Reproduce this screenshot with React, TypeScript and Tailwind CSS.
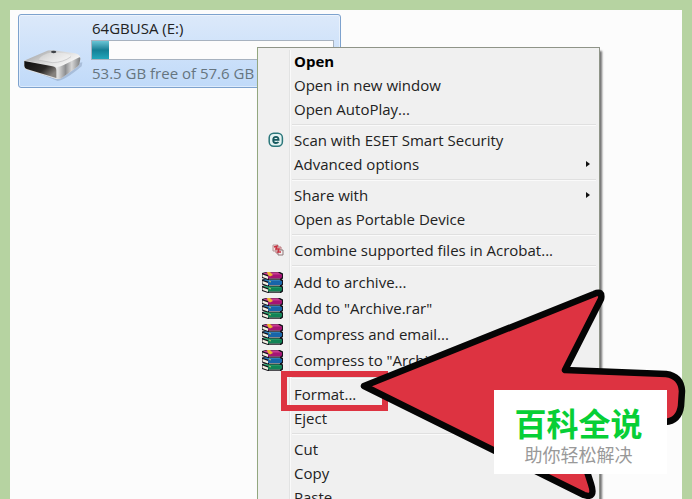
import type { ReactNode } from 'react';

function DriveIcon() {
  return (
    <svg viewBox="18 115 186 105" className="h-[35px] w-[62px]" aria-hidden="true">
      <defs>
        <linearGradient id="driveTop" x1="0" y1="0" x2="1" y2="1">
          <stop offset="0" stopColor="#8f9193" />
          <stop offset="0.35" stopColor="#d4d4d4" />
          <stop offset="0.6" stopColor="#f2f2f2" />
          <stop offset="1" stopColor="#d0d1d2" />
        </linearGradient>
        <linearGradient id="driveSide" x1="0" y1="0" x2="1" y2="0">
          <stop offset="0" stopColor="#f7f7f7" />
          <stop offset="0.2" stopColor="#c2c2c2" />
          <stop offset="0.4" stopColor="#8d8e90" />
          <stop offset="0.65" stopColor="#d6d6d6" />
          <stop offset="1" stopColor="#7c7e80" />
        </linearGradient>
        <linearGradient id="driveFront" x1="0" y1="0" x2="1" y2="0.6">
          <stop offset="0" stopColor="#0e0e0e" />
          <stop offset="0.65" stopColor="#2b2826" />
          <stop offset="1" stopColor="#85817d" />
        </linearGradient>
      </defs>
      <path d="M40 178 L128 214 Q150 212 200 170 L202 158 L150 170 Z" fill="#8297b4" opacity="0.45" />
      <path d="M27 153 L90 126 Q100 121 115 122 L180 131 Q196 134 196 146 L193 164 Q190 170 182 175 L140 205 Q132 210 122 207 L34 179 Q28 176 27 170 Z" fill="url(#driveTop)" />
      <path d="M122 172 Q136 172 146 166 L190 144 Q197 141 196 148 L193 164 Q190 170 182 175 L140 205 Q132 210 122 207 Z" fill="url(#driveSide)" />
      <path d="M70 151 Q78 134 112 128 L150 131 Q172 136 164 143 Q146 156 118 159 Z" fill="#fff" opacity="0.3" />
      <path d="M70 151 L112 159 Q146 158 168 141" fill="none" stroke="#bcbdbe" strokeWidth="2" />
      <path d="M27 152 L112 168 Q128 170 129 181 L129 206 Q125 209 118 206 L34 180 Q28 177 27 170 Z" fill="#dedede" />
      <path d="M28 154 L112 170 Q124 172 124 182 L124 205 L35 178 Q29 176 28 169 Z" fill="url(#driveFront)" />
      <ellipse cx="116" cy="127" rx="8" ry="3.5" fill="#3f4246" />
    </svg>
  );
}

function EsetIcon() {
  return (
    <svg viewBox="0 0 16 16" className="h-4 w-4" aria-hidden="true">
      <rect x="1.2" y="1.2" width="13.2" height="13" rx="4.5" fill="#e4f3f2" stroke="#2b777b" strokeWidth="1.5" />
      <path d="M5.2 7.9 H10.6 Q10.5 4.8 8 4.8 Q5.2 4.8 5.2 7.9 Q5.2 11 8 11 Q9.6 11 10.5 10" fill="none" stroke="#17595f" strokeWidth="1.8" />
    </svg>
  );
}

function CombineIcon() {
  return (
    <svg viewBox="0 0 12 12" className="h-3 w-3" aria-hidden="true">
      <path d="M1 1 H6 V7 H1 Z" fill="#f3dede" stroke="#b59496" />
      <path d="M4 3 H9 V9 H4 Z" fill="#f3cccc" stroke="#b8777d" />
      <path d="M6 6 H11 V11 H6 Z" fill="#f4eeee" stroke="#8c7779" />
      <path d="M2 3 L5 2 L4 5 L7 5 L6 8 L9 8" fill="none" stroke="#c7303f" strokeWidth="1.4" />
    </svg>
  );
}

function Book({ y, color, light }: { y: number; color: string; light: string }) {
  return (
    <g transform={`translate(0 ${y})`}>
      <path d="M1 1 L5 0 H19 L22 1.500 V6.500 L20 8 H7 L1 6 Z" fill="#15131a" />
      <path d="M1.500 2.500 L7 4.500 V7 L1.500 5 Z" fill="#f3efe2" />
      <path d="M2 1.500 L6 0.300 H17 L21 3 H7 Z" fill={light} />
      <path d="M7 2.500 H21 V5 L20 6.500 H7 Z" fill={color} />
      <path d="M8 7 H19" stroke="#d5d5d5" strokeWidth="0.6" />
    </g>
  );
}

function RarIcon() {
  return (
    <svg viewBox="0 0 23 23" className="h-[23px] w-[23px]" aria-hidden="true">
      <Book y={14} color="#118355" light="#35ac79" />
      <Book y={7.5} color="#1865a8" light="#2f7fba" />
      <Book y={1} color="#a51474" light="#c83b91" />
      <path d="M6 1 L9 1 L12 4 L9 5.500 L7 4 Z" fill="#ecb52f" />
      <path d="M8 10 L10 11 M8 17 L10 18" stroke="#c3cc6b" strokeWidth="1" />
    </svg>
  );
}

type ItemProps = {
  label: string;
  icon?: ReactNode;
  bold?: boolean;
  submenu?: boolean;
  tall?: boolean;
};

function MenuItem({ label, icon, bold, submenu, tall }: ItemProps) {
  return (
    <button
      type="button"
      role="menuitem"
      className={`flex w-full items-center text-left whitespace-nowrap ${tall ? 'h-[26px]' : 'h-6'} ${bold ? 'font-bold text-black' : ''}`}
    >
      <span className={`flex w-9 shrink-0 items-center ${tall ? 'pl-[3px]' : 'justify-end pr-2.5'}`}>{icon}</span>
      <span className="flex-1">{label}</span>
      {submenu && (
        <svg viewBox="0 0 4 6" className="mr-[9px] h-1.5 w-1" aria-hidden="true">
          <path d="M0 0 L4 3 L0 6 Z" fill="#111" />
        </svg>
      )}
    </button>
  );
}

function Separator({ wide }: { wide?: boolean }) {
  return (
    <div role="separator" className={`mr-[3px] ml-[34px] flex items-center ${wide ? 'h-[9px]' : 'h-[7px]'}`}>
      <div className="h-0.5 w-full border-t border-[#e0e0e0] bg-[#fafafa]" />
    </div>
  );
}

function ContextMenu() {
  return (
    <div
      role="menu"
      className="absolute top-[47px] left-[257px] w-[343px] border border-[#8f9488] border-l-[#93a77f] bg-[#f0f0f0] py-px shadow-[2px_4px_2px_rgba(0,0,0,0.55)]"
    >
      <div className="absolute inset-y-0.5 left-[31px] w-0.5 border-l border-[#e2e3e3] bg-[#fafafa]" />
      <div className="relative">
        <MenuItem label="Open" bold />
        <MenuItem label="Open in new window" />
        <MenuItem label="Open AutoPlay..." />
        <Separator />
        <MenuItem label="Scan with ESET Smart Security" icon={<EsetIcon />} />
        <MenuItem label="Advanced options" submenu />
        <Separator />
        <MenuItem label="Share with" submenu />
        <MenuItem label="Open as Portable Device" />
        <Separator />
        <MenuItem label="Combine supported files in Acrobat..." icon={<CombineIcon />} />
        <Separator />
        <MenuItem label="Add to archive..." icon={<RarIcon />} tall />
        <MenuItem label={'Add to "Archive.rar"'} icon={<RarIcon />} tall />
        <MenuItem label="Compress and email..." icon={<RarIcon />} tall />
        <MenuItem label={'Compress to "Archive.rar" and email'} icon={<RarIcon />} tall />
        <Separator wide />
        <MenuItem label="Format..." />
        <MenuItem label="Eject" />
        <Separator />
        <MenuItem label="Cut" />
        <MenuItem label="Copy" />
        <MenuItem label="Paste" />
      </div>
    </div>
  );
}

function DriveTile() {
  return (
    <section className="mt-1 ml-2 flex h-[74px] w-[323px] items-center rounded-[3px] border border-[#7da2ce] bg-linear-to-b from-[#dce9fa] to-[#c0daf9] shadow-[inset_0_0_0_1px_rgba(255,255,255,0.45)]">
      <div className="mt-7 ml-0.5 shrink-0">
        <DriveIcon />
      </div>
      <div className="ml-2 flex-1 pr-1.5">
        <h1 className="pl-px leading-6">64GBUSA (E:)</h1>
        <div className="h-5 border border-[#a7b2bf] bg-[#fcfcfc]">
          <div className="h-full w-[17px] bg-linear-to-b from-[#67c6d6] via-[#137f95] to-[#23a7bb]" />
        </div>
        <p className="pl-px leading-[26px] text-[#66757f]">53.5 GB free of 57.6 GB</p>
      </div>
    </section>
  );
}

export default function App() {
  return (
    <main className="relative h-screen overflow-hidden bg-[#b6d3a1] px-2.5 pt-2.5 font-['Open_Sans','Noto_Sans',sans-serif] text-[15px] text-[#222]">
      <div className="flex h-full flex-col items-start bg-[#fcfcfc]">
        <DriveTile />
      </div>
      <ContextMenu />
      <div className="absolute top-[371px] left-[281px] h-10 w-[107px] border-6 border-[#dd3341]" />
      <svg viewBox="0 0 692 499" className="absolute top-0 left-0 h-[499px] w-[692px]" aria-hidden="true">
        <path
          d="M364 386 L594 294 Q603 290 601 299 L565 370 L666 374 Q681 376 682 391 L681 406 Q679 421 665 422 L572 425 L591 484 Q596 499 584 495 Z"
          fill="#dd3341"
          stroke="#050505"
          strokeWidth="6.500"
          strokeLinejoin="round"
        />
      </svg>
      <aside className="absolute top-[390px] left-[494px] flex h-21 w-[173px] flex-col items-center bg-white pt-3.5 pr-1 font-['Noto_Sans_CJK_SC',sans-serif]">
        <strong className="text-[32px] leading-9 font-bold text-[#07cf36]">百科全说</strong>
        <span className="text-[18px] leading-7 text-[#999]">助你轻松解决</span>
      </aside>
    </main>
  );
}
